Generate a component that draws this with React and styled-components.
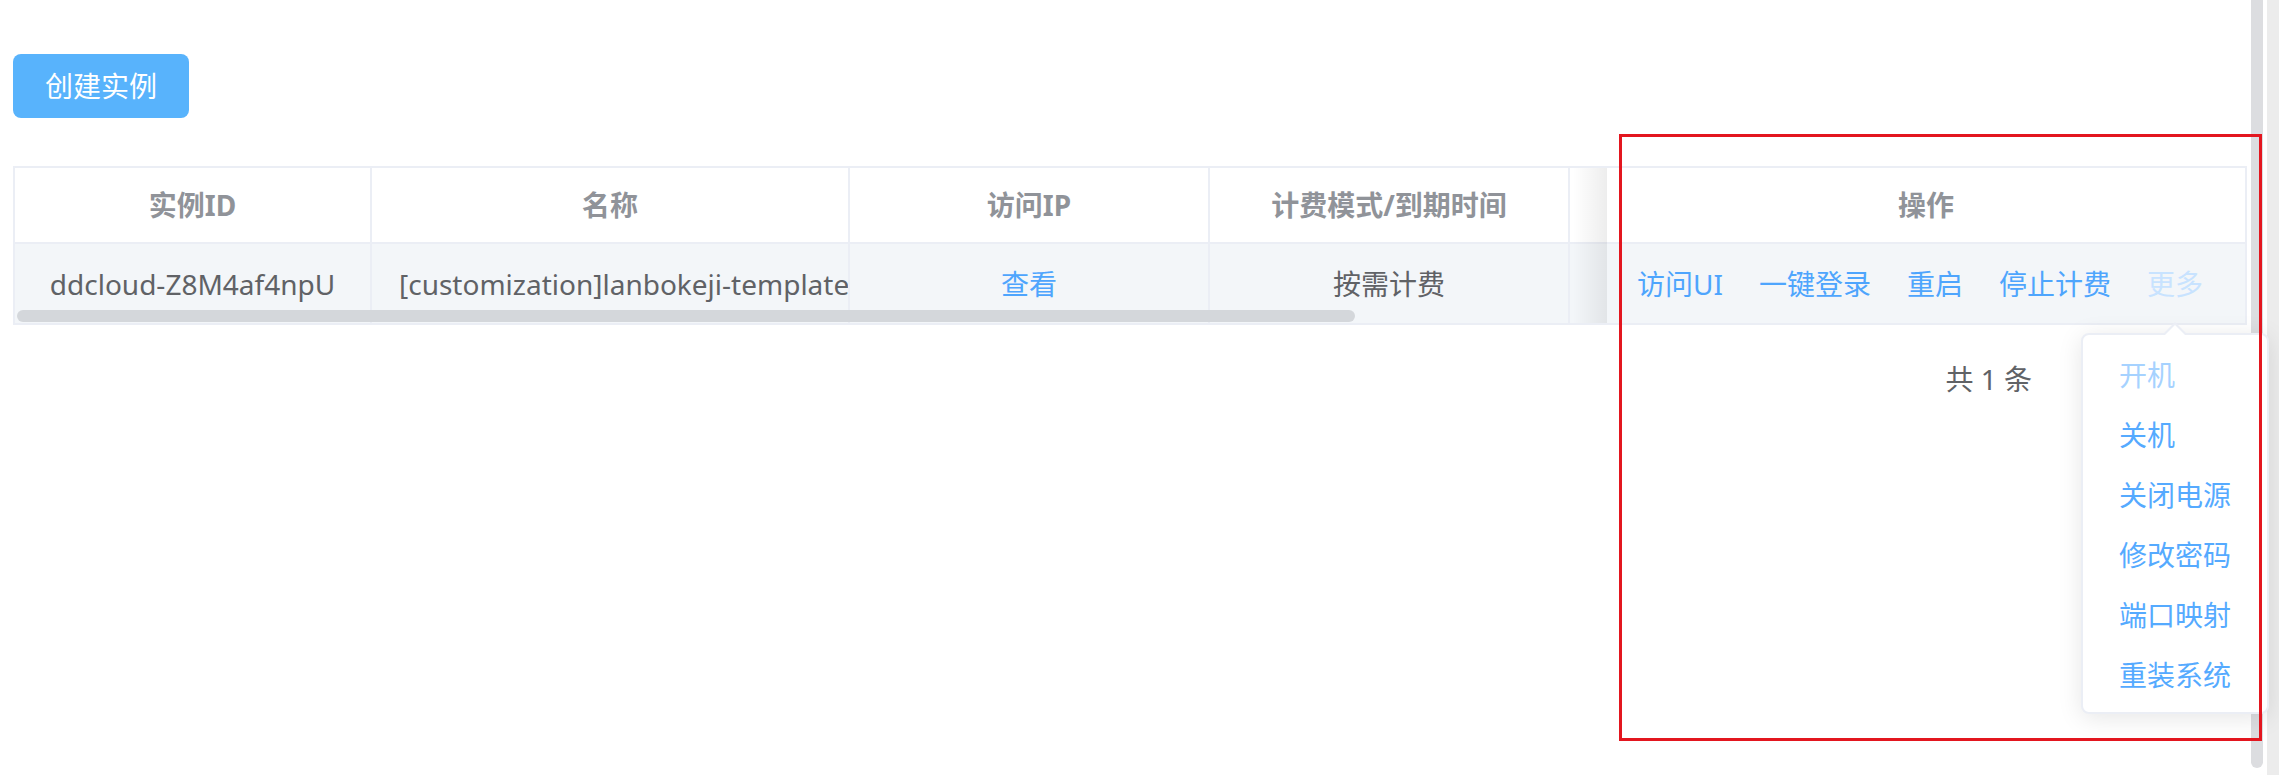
import React from 'react';
import styled, { createGlobalStyle } from 'styled-components';

const GlobalStyle = createGlobalStyle`
  html, body {
    margin: 0;
    padding: 0;
    background: #ffffff;
  }
  body {
    font-family: "Noto Sans", "Noto Sans CJK SC", sans-serif;
  }
  * {
    box-sizing: border-box;
  }
`;

const Page = styled.div`
  display: flex;
  width: 2279px;
  height: 775px;
  overflow: hidden;
`;

const Main = styled.div`
  position: relative;
  z-index: 1;
  flex: 1;
  min-width: 0;
  padding: 54px 4px 0 13px;
`;

const ThumbColumn = styled.div`
  width: 12px;
  flex: none;
`;

const Thumb = styled.div`
  height: 768px;
  background: #dcdde0;
  border-radius: 0 0 6px 6px;
`;

const Gap = styled.div`
  width: 4px;
  flex: none;
`;

const OuterTrack = styled.div`
  width: 12px;
  flex: none;
  background: #ececec;
`;

const CreateButton = styled.button`
  display: flex;
  align-items: center;
  justify-content: center;
  width: 176px;
  height: 64px;
  padding: 0;
  border: none;
  border-radius: 8px;
  background: #58b3fc;
  color: #ffffff;
  font-family: inherit;
  font-size: 28px;
  line-height: 1;
`;

const Table = styled.div`
  display: flex;
  margin-top: 48px;
  border: 2px solid #ebeef5;
`;

const ScrollArea = styled.div`
  position: relative;
  flex: 1;
  min-width: 0;
  overflow: hidden;
  display: grid;
  grid-template-columns: 357px 478px 360px 360px 400px;
  grid-template-rows: 76px 79px;
`;

const Cell = styled.div`
  display: flex;
  align-items: center;
  justify-content: ${(p) => (p.$left ? 'flex-start' : 'center')};
  padding: ${(p) => (p.$left ? '0 4px 0 27px' : '0 20px')};
  border-right: ${(p) => (p.$noRight ? 'none' : '2px solid #ebeef5')};
  overflow: hidden;
  white-space: nowrap;
  font-size: 28px;
  line-height: 1;
`;

const HeadCell = styled(Cell)`
  background: #ffffff;
  border-bottom: 2px solid #ebeef5;
  color: #909399;
  font-weight: 700;
`;

const BodyCell = styled(Cell)`
  background: #f3f6f9;
  color: #606266;
`;

const Link = styled.span`
  color: ${(p) => (p.$muted ? '#c8e3ff' : '#4ea5fd')};
  cursor: pointer;
`;

const HScrollThumb = styled.div`
  position: absolute;
  left: 2px;
  top: 142px;
  width: 1338px;
  height: 12px;
  border-radius: 6px;
  background: #d4d7db;
`;

const FixedColumn = styled.div`
  position: relative;
  width: 638px;
  flex: none;
  display: grid;
  grid-template-rows: 76px 79px;

  &::before {
    content: '';
    position: absolute;
    top: 0;
    bottom: 0;
    left: -34px;
    width: 34px;
    background: linear-gradient(to right, rgba(0, 0, 0, 0), rgba(0, 0, 0, 0.07));
  }
`;

const ActionCell = styled(BodyCell)`
  gap: 36px;
  padding: 0 12px 0 0;
`;

const Pagination = styled.div`
  display: flex;
  justify-content: flex-end;
  align-items: center;
  height: 64px;
  margin-top: 21px;
  padding-right: 215px;
  color: #606266;
  font-size: 28px;
  white-space: pre;
`;

const Dropdown = styled.div`
  position: absolute;
  left: 2081px;
  top: 333px;
  width: 188px;
  padding: 10px 0 7px;
  background: #ffffff;
  border: 2px solid #ebeef5;
  border-radius: 8px;
  box-shadow: 0 4px 24px rgba(0, 0, 0, 0.1);
  z-index: 5;

  &::before,
  &::after {
    content: '';
    position: absolute;
    left: 80px;
    width: 0;
    height: 0;
    border: 12px solid transparent;
    border-top: none;
  }
  &::before {
    top: -13px;
    border-bottom: 12px solid #ebeef5;
  }
  &::after {
    top: -10px;
    border-bottom: 12px solid #ffffff;
  }
`;

const MenuItem = styled.div`
  height: 60px;
  display: flex;
  align-items: center;
  padding-left: 36px;
  font-size: 28px;
  line-height: 1;
  white-space: nowrap;
  color: ${(p) => (p.$disabled ? '#a6d2ff' : '#55aaff')};
`;

const Annotation = styled.div`
  position: absolute;
  left: 1619px;
  top: 134px;
  width: 643px;
  height: 607px;
  border: 3px solid #e3161f;
  z-index: 10;
  pointer-events: none;
`;

const menuItems = [
  { label: '开机', disabled: true },
  { label: '关机' },
  { label: '关闭电源' },
  { label: '修改密码' },
  { label: '端口映射' },
  { label: '重装系统' },
];

const actions = ['访问UI', '一键登录', '重启', '停止计费'];

export default function App() {
  return (
    <>
      <GlobalStyle />
      <Page>
        <Main>
          <CreateButton>创建实例</CreateButton>

          <Table>
            <ScrollArea>
              <HeadCell>实例ID</HeadCell>
              <HeadCell>名称</HeadCell>
              <HeadCell>访问IP</HeadCell>
              <HeadCell>计费模式/到期时间</HeadCell>
              <HeadCell $noRight />

              <BodyCell>ddcloud-Z8M4af4npU</BodyCell>
              <BodyCell $left>[customization]lanbokeji-template</BodyCell>
              <BodyCell>
                <Link>查看</Link>
              </BodyCell>
              <BodyCell>按需计费</BodyCell>
              <BodyCell $noRight />

              <HScrollThumb />
            </ScrollArea>

            <FixedColumn>
              <HeadCell $noRight>操作</HeadCell>
              <ActionCell $noRight>
                {actions.map((a) => (
                  <Link key={a}>{a}</Link>
                ))}
                <Link $muted>更多</Link>
              </ActionCell>
            </FixedColumn>
          </Table>

          <Pagination>共 1 条</Pagination>

          <Dropdown>
            {menuItems.map((item) => (
              <MenuItem key={item.label} $disabled={item.disabled}>
                {item.label}
              </MenuItem>
            ))}
          </Dropdown>

          <Annotation />
        </Main>
        <ThumbColumn>
          <Thumb />
        </ThumbColumn>
        <Gap />
        <OuterTrack />
      </Page>
    </>
  );
}
